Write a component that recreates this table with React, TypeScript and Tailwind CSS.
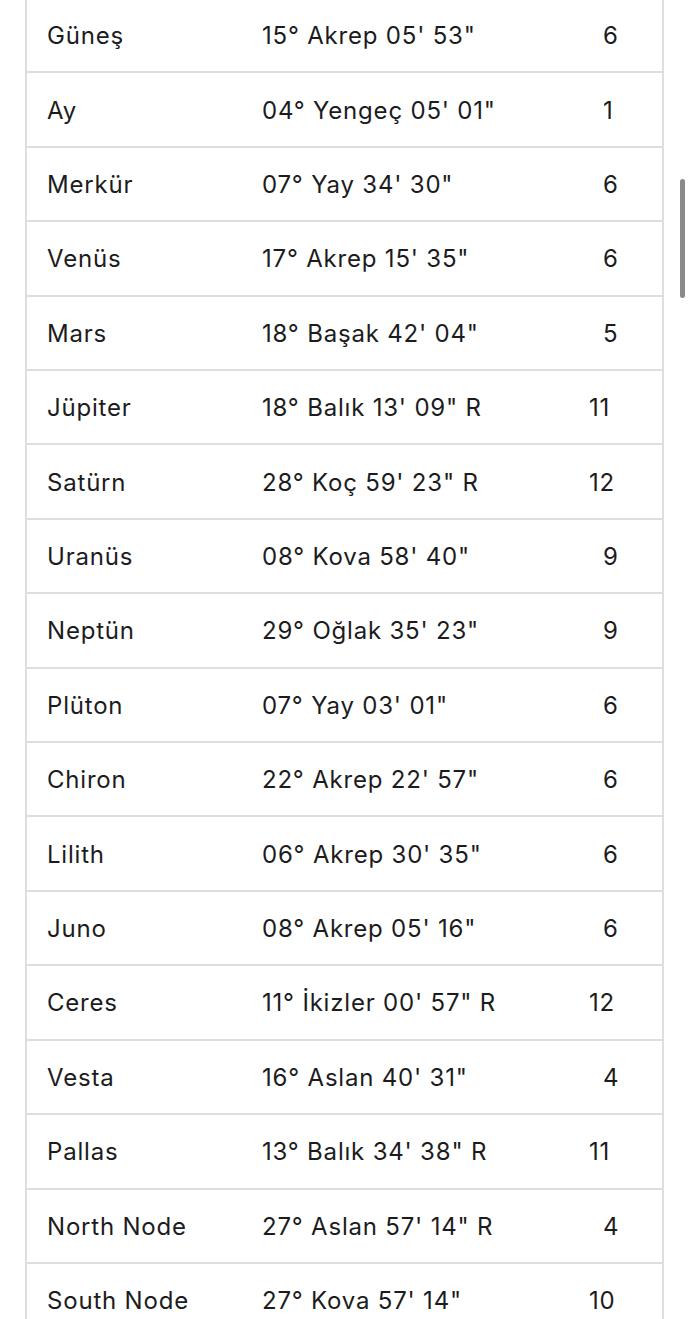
const planets: [string, string, string][] = [
  ["Güneş", "15° Akrep 05' 53\"", "6"],
  ["Ay", "04° Yengeç 05' 01\"", "1"],
  ["Merkür", "07° Yay 34' 30\"", "6"],
  ["Venüs", "17° Akrep 15' 35\"", "6"],
  ["Mars", "18° Başak 42' 04\"", "5"],
  ["Jüpiter", "18° Balık 13' 09\" R", "11"],
  ["Satürn", "28° Koç 59' 23\" R", "12"],
  ["Uranüs", "08° Kova 58' 40\"", "9"],
  ["Neptün", "29° Oğlak 35' 23\"", "9"],
  ["Plüton", "07° Yay 03' 01\"", "6"],
  ["Chiron", "22° Akrep 22' 57\"", "6"],
  ["Lilith", "06° Akrep 30' 35\"", "6"],
  ["Juno", "08° Akrep 05' 16\"", "6"],
  ["Ceres", "11° İkizler 00' 57\" R", "12"],
  ["Vesta", "16° Aslan 40' 31\"", "4"],
  ["Pallas", "13° Balık 34' 38\" R", "11"],
  ["North Node", "27° Aslan 57' 14\" R", "4"],
  ["South Node", "27° Kova 57' 14\"", "10"],
];

export default function App() {
  return (
    <div className="relative h-[1319px] w-[690px] overflow-hidden bg-white font-['Inter','Liberation_Sans',sans-serif] text-[24px] tracking-[0.8px] text-[#1c1c1e]">
      <div className="ml-[25px] mt-[-1px] w-[639px] border-x-2 border-[#dedede]">
        {planets.map(([name, pos, house]) => (
          <div
            key={name}
            className="grid h-[74.41px] grid-cols-[235px_327px_1fr] items-center border-b-2 border-[#dedede] pt-[2px]"
          >
            <span className="pl-[20px]">{name}</span>
            <span>{pos}</span>
            <span className={house.length === 1 ? "pl-[14px]" : ""}>{house}</span>
          </div>
        ))}
      </div>
      <div className="absolute left-[680px] top-[179px] h-[119px] w-[5px] rounded-full bg-[#8a8a8a]" />
    </div>
  );
}
